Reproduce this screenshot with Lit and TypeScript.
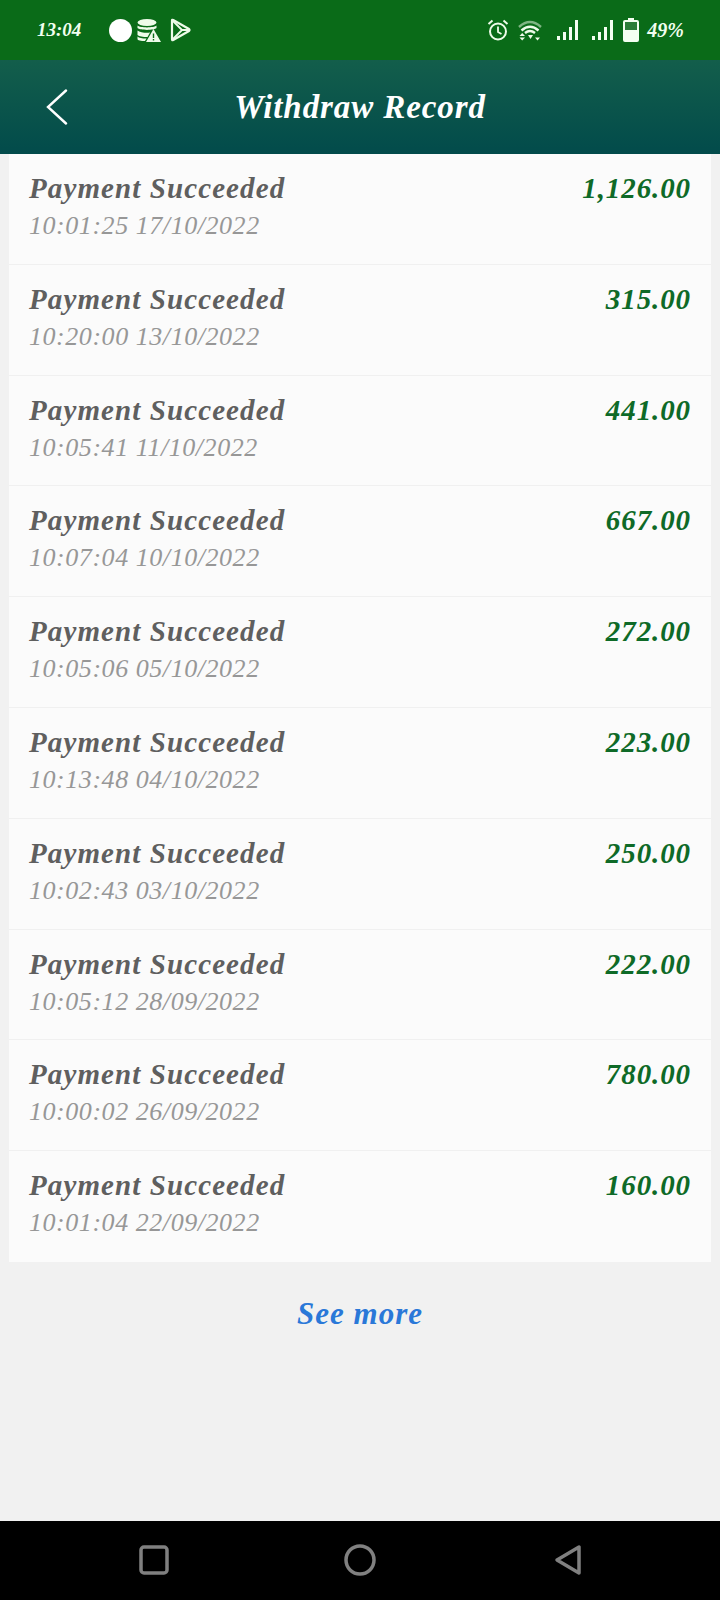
import { LitElement, html, css } from "lit";
import { customElement } from "lit/decorators.js";

const rows: [string, string][] = [
  ["10:01:25 17/10/2022", "1,126.00"],
  ["10:20:00 13/10/2022", "315.00"],
  ["10:05:41 11/10/2022", "441.00"],
  ["10:07:04 10/10/2022", "667.00"],
  ["10:05:06 05/10/2022", "272.00"],
  ["10:13:48 04/10/2022", "223.00"],
  ["10:02:43 03/10/2022", "250.00"],
  ["10:05:12 28/09/2022", "222.00"],
  ["10:00:02 26/09/2022", "780.00"],
  ["10:01:04 22/09/2022", "160.00"],
];

@customElement("app-root")
export class AppRoot extends LitElement {
  static styles = css`
    :host {
      display: flex;
      flex-direction: column;
      width: 720px;
      height: 1600px;
      background: #f1f1f1;
      font-family: "DejaVu Serif", "Liberation Serif", serif;
      font-style: italic;
      overflow: hidden;
    }
    .status {
      height: 60px;
      flex: none;
      background: #0a6b18;
      color: #f2fff0;
      display: flex;
      align-items: center;
      padding: 0 36px 0 37px;
      box-sizing: border-box;
    }
    .time { font-size: 19px; font-family: "Liberation Serif", serif; font-weight: 700; width: 72px; }
    .left { display: flex; align-items: center; gap: 5px; }
    .dot { width: 23px; height: 23px; border-radius: 50%; background: #fff; }
    .spacer { flex: 1; }
    .right { display: flex; align-items: center; }
    .pct { font-size: 20px; font-family: "Liberation Serif", serif; font-weight: 700; margin-left: 8px; }
    .header {
      height: 94px;
      flex: none;
      background: linear-gradient(#135e4b, #024b4b);
      position: relative;
      display: flex;
      align-items: center;
      justify-content: center;
      color: #fff;
    }
    .back { position: absolute; left: 46px; top: 29px; }
    .htitle { font-size: 29px; font-weight: 700; font-family: "Liberation Serif", serif; letter-spacing: 0.9px; font-size: 33px; }
    .list { margin: 0 9px; background: #fbfbfb; display: flex; flex-direction: column; }
    .row {
      height: 110.8px;
      box-sizing: border-box;
      border-bottom: 1px solid #f0f0f0;
      padding: 15px 20px 0;
      display: flex;
      justify-content: space-between;
    }
    .row:last-child { border-bottom: none; }
    .name { font-size: 29px; line-height: 38px; color: #5f5f5f; font-weight: 700; font-family: "Liberation Serif", serif; letter-spacing: 1.1px; }
    .date { font-size: 26px; line-height: 38px; color: #979797; font-family: "Liberation Serif", serif; letter-spacing: 0.55px; }
    .amt { font-size: 29px; line-height: 38px; color: #0e6a27; font-weight: 700; font-family: "Liberation Serif", serif; letter-spacing: 0.9px; }
    .more {
      text-align: center;
      margin-top: 32px;
      font-size: 31px;
      line-height: 40px;
      color: #2a78d8;
      font-weight: 700;
      font-family: "Liberation Serif", serif;
      letter-spacing: 1px;
    }
    .fill { flex: 1; }
    .nav {
      height: 79px;
      flex: none;
      background: #000;
      display: flex;
      align-items: flex-start;
    }
    .nav svg { display: block; }
  `;

  render() {
    return html`
      <div class="status">
        <span class="time">13:04</span>
        <div class="left">
          <div class="dot"></div>
          <svg width="24" height="24" viewBox="0 0 24 24" fill="#eefbe9">
            <ellipse cx="10" cy="4.5" rx="9.5" ry="3.5"/>
            <path d="M.5 7.5C3 10 17 10 19.5 7.5V10C17 12.5 3 12.500.5 10ZM.5 12.500C3 15 11 15 13 14.500L10.500 19C6 19 2 18.500.5 17ZM.5 18.500C2 20 5 20.500 9.500 20.500L8 23C4 23 .5 22.500.5 21Z"/>
            <path fill-rule="evenodd" d="M16.500 11L24 24H9ZM15.800 15.500V20H17.200V15.500ZM15.800 21V22.400H17.200V21Z"/>
          </svg>
          <svg style="margin-left:4px" width="21" height="24" viewBox="0 0 21 24" fill="none" stroke="#eefbe9" stroke-width="2.200" stroke-linejoin="round">
            <path d="M2 2.500Q2 1.500 3.200 2L19 11Q20 12 19 13L3.200 22Q2 22.500 2 21.500Z"/>
            <path d="M2.500 2.500L12 12L2.500 21.500M12 12L19 12" stroke-width="1.800"/>
          </svg>
        </div>
        <div class="spacer"></div>
        <div class="right">
          <svg width="22" height="22" viewBox="0 0 22 22" fill="none" stroke="#eefbe9" stroke-width="2">
            <circle cx="11" cy="12.500" r="8"/>
            <path d="M11 7.500V13L14.500 15" stroke-width="1.800"/>
            <path d="M1.500 5L5.500 1.500M20.500 5L16.500 1.500"/>
          </svg>
          <svg style="margin-left:9px" width="24" height="22" viewBox="0 0 24 22" fill="none" stroke-width="2.400">
            <path d="M1 8Q12 -2 23 8" stroke="#7fb583"/>
            <path d="M3.500 11.500Q12 4 20.500 11.500" stroke="#eefbe9"/>
            <path d="M7 14Q12 10 17 14" stroke="#eefbe9"/>
            <path d="M1.500 17H7L4.200 14ZM1.500 18.500H7L4.200 21.500ZM10 16H15L12.500 20Z" fill="#eefbe9" stroke="none"/>
            <path d="M17 18.500H22L19.500 21.500Z" fill="#eefbe9" stroke="none"/>
          </svg>
          <svg style="margin-left:15px" width="22" height="20" viewBox="0 0 22 20" fill="#f4fff1">
            <rect x="0" y="16" width="3" height="4"/><rect x="6" y="12" width="3" height="8"/><rect x="12" y="7" width="3" height="13"/><rect x="18" y="0" width="3" height="20"/>
          </svg>
          <svg style="margin-left:13px" width="22" height="20" viewBox="0 0 22 20" fill="#f4fff1">
            <rect x="0" y="16" width="3" height="4"/><rect x="6" y="12" width="3" height="8"/><rect x="12" y="7" width="3" height="13"/><rect x="18" y="0" width="3" height="20"/>
          </svg>
          <svg style="margin-left:9px" width="16" height="24" viewBox="0 0 16 24">
            <path d="M5 0H11V2H14Q16 2 16 4V22Q16 24 14 24H2Q0 24 0 22V4Q0 2 2 2H5Z" fill="#f4fff1"/>
            <rect x="2" y="4" width="12" height="8" fill="#2b7d38"/>
          </svg>
          <span class="pct">49%</span>
        </div>
      </div>
      <div class="header">
        <svg class="back" width="22" height="36" viewBox="0 0 22 36" fill="none" stroke="#fff" stroke-width="2.400" stroke-linecap="round">
          <path d="M20 1.500L2 18L20 34.500"/>
        </svg>
        <span class="htitle">Withdraw Record</span>
      </div>
      <div class="list">
        ${rows.map(
          ([d, a]) => html`<div class="row">
            <div>
              <div class="name">Payment Succeeded</div>
              <div class="date">${d}</div>
            </div>
            <div class="amt">${a}</div>
          </div>`
        )}
      </div>
      <div class="more">See more</div>
      <div class="fill"></div>
      <div class="nav">
        <svg width="720" height="79" viewBox="0 0 720 79" fill="none" stroke="#808080" stroke-width="3.500" stroke-linejoin="round">
          <rect x="141" y="26" width="26" height="26" rx="3"/>
          <circle cx="360" cy="39" r="14"/>
          <path d="M557 39L579 26V52Z"/>
        </svg>
      </div>
    `;
  }
}
